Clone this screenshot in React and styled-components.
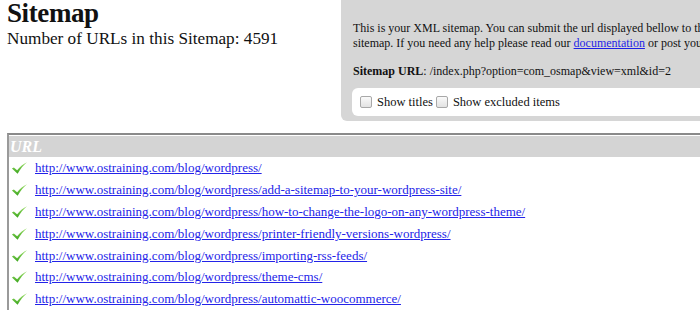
import React from 'react'
import styled, { createGlobalStyle } from 'styled-components'

const Global = createGlobalStyle`
  html, body { margin: 0; padding: 0; background: #fff; }
  body {
    width: 700px;
    height: 310px;
    overflow: hidden;
    font-family: "Liberation Serif", "Times New Roman", serif;
    color: #111;
  }
`

const Page = styled.div`
  padding: 0 0 0 7px;
`

const Top = styled.div`
  display: flex;
  justify-content: space-between;
  align-items: flex-start;
  height: 133px;
`

const Intro = styled.div`
  margin-top: 0;
`

const Title = styled.h1`
  font-size: 27px;
  letter-spacing: -0.4px;
  font-weight: bold;
  line-height: 27px;
  margin: 0;
`

const Count = styled.p`
  font-size: 17.2px;
  line-height: 21px;
  margin: 1px 0 0;
`

const Panel = styled.div`
  flex-shrink: 0;
  width: 389px;
  margin-right: -30px;
  height: 121px;
  box-sizing: border-box;
  background: #d6d6d6;
  border-radius: 0 0 0 6px;
  padding: 21px 11px 0 12px;
  font-size: 12px;
  line-height: 15px;
`

const Para = styled.p`
  margin: 0;
  white-space: nowrap;
  a { color: #1f1fe6; }
`

const UrlLine = styled.p`
  margin: 13px 0 0;
  white-space: nowrap;
  b { font-weight: bold; }
`

const Options = styled.div`
  margin-top: 9px;
  margin-left: -1px;
  background: #fff;
  border-radius: 6px 0 0 6px;
  height: 28px;
  display: flex;
  align-items: center;
  padding-left: 8px;
  font-size: 12.5px;
`

const Check = styled.label`
  display: flex;
  align-items: center;
  gap: 5px;
  margin-right: 3px;
`

const Box = styled.span`
  width: 10px;
  height: 10px;
  border: 1px solid #a8a8a8;
  border-radius: 2px;
  background: linear-gradient(#fafafa, #e2e2e2);
`

const Table = styled.div`
  border-top: 2px solid #8a8a8a;
  border-left: 2px solid #9a9a9a;
`

const Head = styled.div`
  background: #d4d4d4;
  height: 21px;
  margin-top: 1px;
  display: flex;
  align-items: center;
  padding-left: 1px;
  color: #fff;
  font-style: italic;
  font-weight: bold;
  font-size: 16px;
`

const Row = styled.div`
  display: flex;
  align-items: center;
  height: 21.9px;
  padding-left: 2px;
  gap: 7px;
  font-size: 13px;
  a {
    color: #2323e8;
    text-decoration: underline;
  }
`

const Tick = () => (
  <svg width="17" height="14" viewBox="0 0 18 14">
    <defs>
      <linearGradient id="tk" x1="0" y1="0" x2="0" y2="1">
        <stop offset="0" stopColor="#9ee06a" />
        <stop offset="1" stopColor="#3aa51c" />
      </linearGradient>
    </defs>
    <path d="M1 7.5 L3 6.5 L6.5 9.5 C9.5 5.5 13 2.5 17 0.8 C13.5 3.5 10 7.5 7 13.2 Z" fill="url(#tk)" />
  </svg>
)

const urls = [
  'http://www.ostraining.com/blog/wordpress/',
  'http://www.ostraining.com/blog/wordpress/add-a-sitemap-to-your-wordpress-site/',
  'http://www.ostraining.com/blog/wordpress/how-to-change-the-logo-on-any-wordpress-theme/',
  'http://www.ostraining.com/blog/wordpress/printer-friendly-versions-wordpress/',
  'http://www.ostraining.com/blog/wordpress/importing-rss-feeds/',
  'http://www.ostraining.com/blog/wordpress/theme-cms/',
  'http://www.ostraining.com/blog/wordpress/automattic-woocommerce/',
]

export default function App() {
  return (
    <Page>
      <Global />
      <Top>
        <Intro>
          <Title>Sitemap</Title>
          <Count>Number of URLs in this Sitemap: 4591</Count>
        </Intro>
        <Panel>
          <Para>This is your XML sitemap. You can submit the url displayed bellow to the search engines</Para>
          <Para>sitemap. If you need any help please read our <a href="#">documentation</a> or post your question</Para>
          <UrlLine><b>Sitemap URL</b>: /index.php?option=com_osmap&amp;view=xml&amp;id=2</UrlLine>
          <Options>
            <Check><Box />Show titles</Check>
            <Check><Box />Show excluded items</Check>
          </Options>
        </Panel>
      </Top>
      <Table>
        <Head>URL</Head>
        {urls.map(u => (
          <Row key={u}>
            <Tick />
            <a href="#">{u}</a>
          </Row>
        ))}
      </Table>
    </Page>
  )
}
